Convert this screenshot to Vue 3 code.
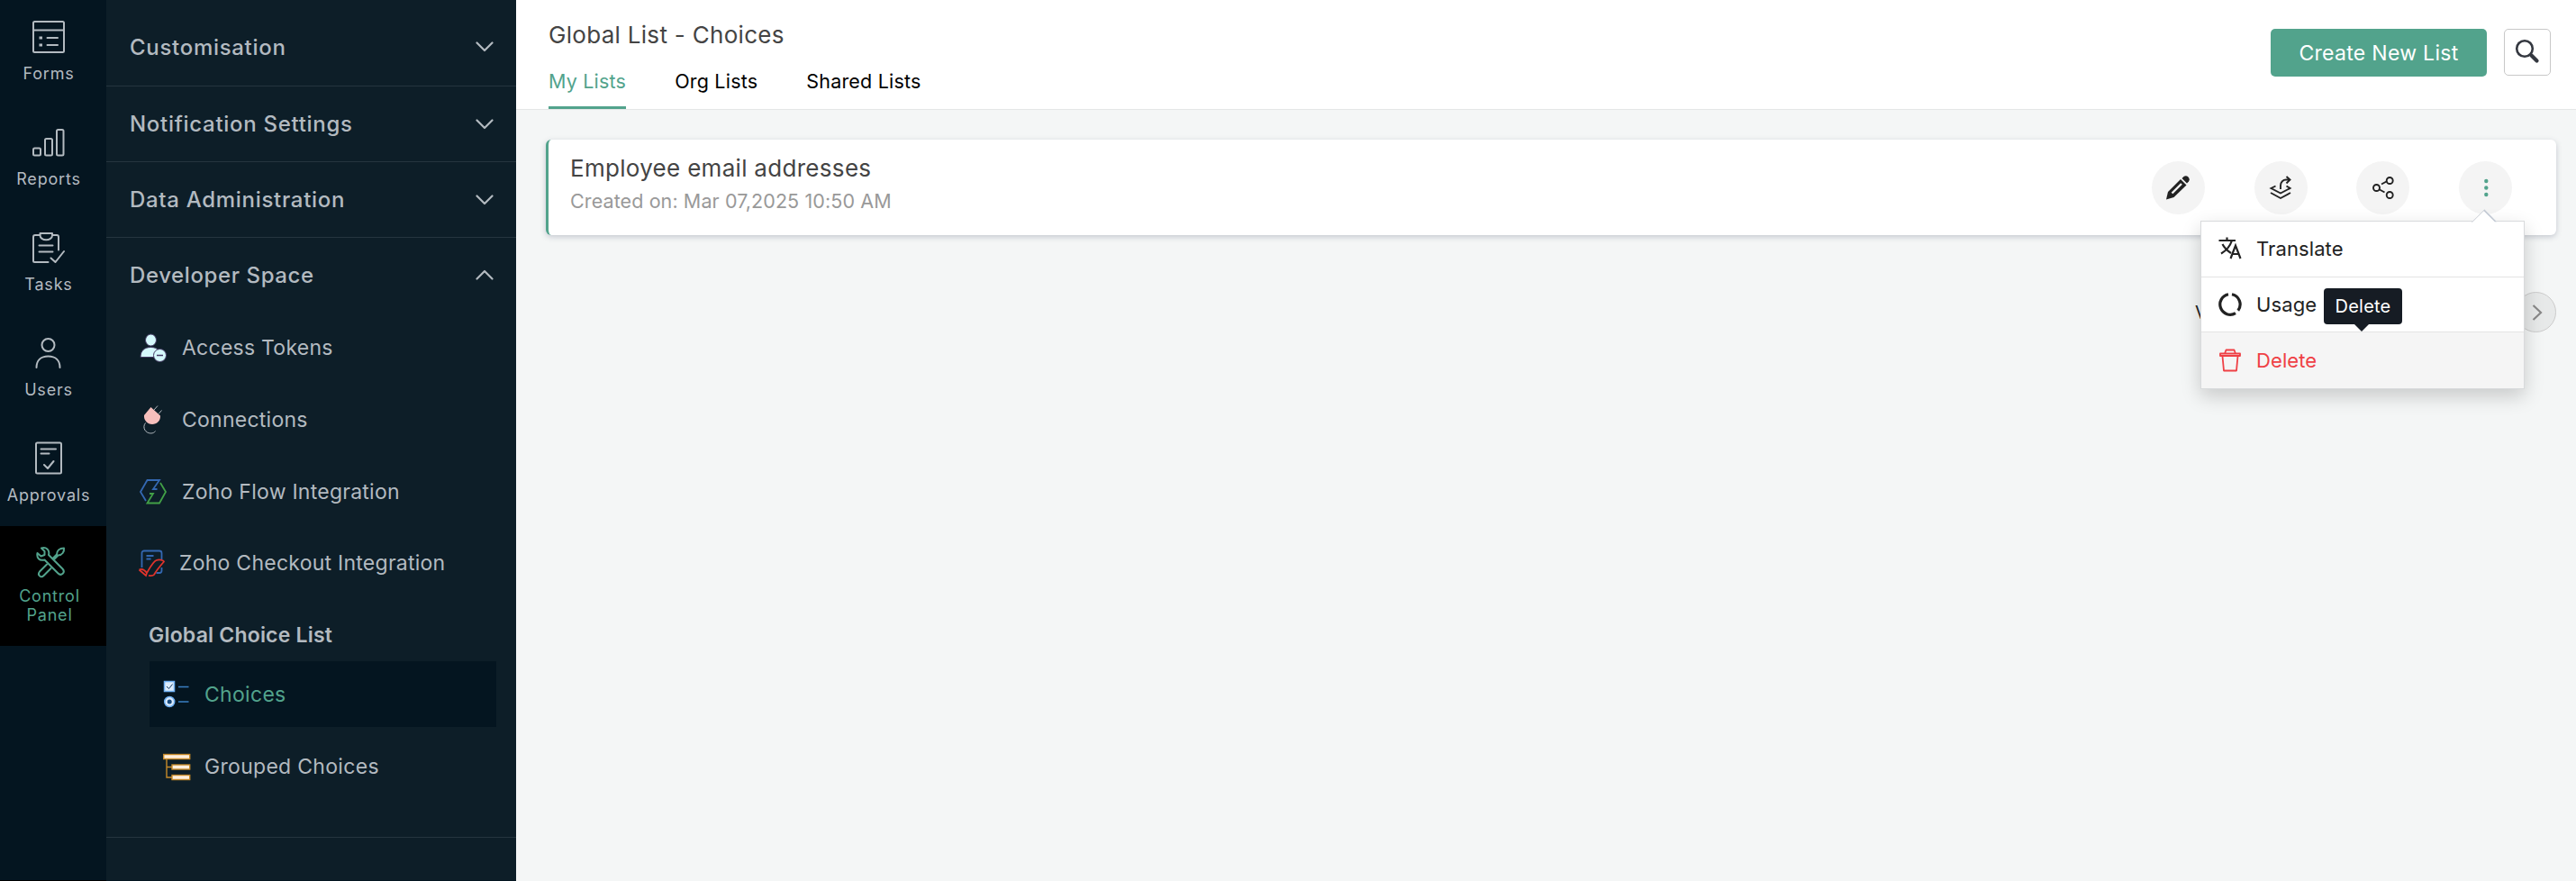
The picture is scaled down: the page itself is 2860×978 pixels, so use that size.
<template>
  <div class="app">
    <nav class="rail">
      <a v-for="item in railItems" :key="item.name" class="rail-item" :class="{ active: item.name === activeRail }" @click="activeRail = item.name">
        <svg v-if="item.icon === 'forms'" class="rail-icon" viewBox="0 0 36 40">
          <rect x="1" y="3" width="34" height="34" rx="1.5" />
          <path d="M1 12.5h34M16.5 21h11.5M16.5 29h11.5" />
          <path class="dots" d="M7.5 21h3.5M7.5 29h3.5" />
        </svg>
        <svg v-else-if="item.icon === 'reports'" class="rail-icon" viewBox="0 0 36 40">
          <rect x="1" y="26.5" width="8" height="8" rx="1.5" />
          <rect x="14" y="16" width="8" height="18.5" rx="1.5" />
          <rect x="27" y="6" width="7.5" height="28.5" rx="1.5" />
        </svg>
        <svg v-else-if="item.icon === 'tasks'" class="rail-icon" viewBox="0 0 36 40">
          <path d="M17.5 36H2.5a1.5 1.5 0 0 1-1.5-1.5V8a2 2 0 0 1 2-2h5.5M22 6h5a2 2 0 0 1 2 2v14.5" />
          <path d="M8.5 4h13.5v2.5a6.5 4.5 0 0 1-13.5 0zM7.5 17.5h15M7.5 24.5h15M20.5 31.5l5 4.5 9.5-12" />
        </svg>
        <svg v-else-if="item.icon === 'users'" class="rail-icon" viewBox="0 0 36 40">
          <circle cx="17.5" cy="11" r="7" />
          <path d="M4.5 36c0-8 5-12.5 13-12.5s13 4.5 13 12.5" />
        </svg>
        <svg v-else-if="item.icon === 'approvals'" class="rail-icon" viewBox="0 0 36 40">
          <rect x="4" y="2.5" width="28" height="34" rx="1.5" />
          <path d="M9.5 9.5h16.5M9.5 14.5h9M13 27l4 4 6.5-8" />
        </svg>
        <svg v-else class="rail-icon tools" viewBox="0 0 36 40">
          <path d="M9 4.500c5-2 9.500 2 8 7.500l15.500 15.500c3.500 4-1.500 8.500-5 5L12.500 17.500c-6 1.500-9-2.500-8-7.500l4 3.500 4-1.500v-4z" />
          <path d="M15 22.500l-8 8c-3 4 1.500 7.500 4.500 4.500l8-8M22 15.500l4-4c0-4 3-7 8-7 .5 4-2 8-6.500 8l-4 4" />
        </svg>
        <span class="rail-label">{{ item.name }}</span>
      </a>
    </nav>

    <aside class="sidebar">
      <div v-for="section in sections" :key="section" class="section-head">
        <span>{{ section }}</span>
        <svg class="chevron" :class="{ up: section === 'Developer Space' }" viewBox="0 0 20 12"><path d="M1.5 1.5L10 10l8.5-8.5" /></svg>
      </div>

      <div class="sub-list">
        <a class="sub-item">
          <svg class="sub-icon" viewBox="0 0 32 36">
            <g fill="#d5f9fc" stroke="#443a63" stroke-width="1">
              <ellipse cx="13.5" cy="9.5" rx="6" ry="6.5" />
              <path d="M2 28.5c0-7 4-11 11.500-11S24 21.500 24 28.500z" />
              <circle cx="23.5" cy="26.5" r="7" />
            </g>
            <path d="M20 26.500h7" stroke="#443a63" stroke-width="1.5" />
          </svg>
          <span>Access Tokens</span>
        </a>
        <a class="sub-item">
          <svg class="sub-icon" viewBox="0 0 32 36">
            <path d="M13.500 4l10.500 9.500c.5 5.500-4 9.500-9 9.500-5.500 0-9.500-4.500-9-10z" fill="#f7bfbc" />
            <path d="M17 7l4-4.500M22 11.500l3.500-4M7.500 21.500c-4 5 0 11.500 6 11.500 2.500 0 4-1 5-2.500" fill="none" stroke="#b3bac0" stroke-width="1" />
          </svg>
          <span>Connections</span>
        </a>
        <a class="sub-item">
          <svg class="sub-icon" viewBox="0 0 32 36" fill="none" stroke-width="1.8">
            <path d="M8 28L2 18l7.500-13H23l-7 10h4.500" stroke="#3468b2" />
            <path d="M24 8l6 10-7 12.500H9.500L16 20h-4" stroke="#42a047" />
          </svg>
          <span>Zoho Flow Integration</span>
        </a>
        <a class="sub-item checkout">
          <svg class="sub-icon" viewBox="0 0 32 36" fill="none" stroke-width="1.8">
            <path d="M4.500 23V7A2.500 2.500 0 0 1 7 4.500h17A2.500 2.500 0 0 1 26.500 7v7M26.500 23v3.500A2.500 2.500 0 0 1 24 29h-3.500M9.500 10h8M9.500 13.500h5" stroke="#3468b2" />
            <path d="M1.500 25.500c3-1.500 6 0 8.500 3.500C13.500 23 17 16.500 20.500 15c3-1.200 8-.5 8.500 1.500-3.500 4-8.500 10-11 14.500-1 1.200-4 1.200-6 .8M1.500 25.500L9 32l1-3" stroke="#e0342c" />
          </svg>
          <span>Zoho Checkout Integration</span>
        </a>
      </div>

      <div class="group">
        <div class="group-title">Global Choice List</div>
        <a class="group-item active">
          <svg class="group-icon" viewBox="0 0 32 36">
            <rect x="1.5" y="3.5" width="11" height="11" fill="#dcebfb" stroke="#6fb0f2" stroke-width="1.5" />
            <path d="M4 9l2.500 2.500 4-5" fill="none" stroke="#16395f" stroke-width="1" />
            <circle cx="7.2" cy="26" r="5.5" fill="#dcebfb" stroke="#6fb0f2" stroke-width="1.5" />
            <circle cx="7.2" cy="26" r="2.5" fill="#174a7d" />
            <path d="M17 9.500h11.500M17 26h11.500" stroke="#3a7fc2" stroke-width="1.5" />
          </svg>
          <span>Choices</span>
        </a>
        <a class="group-item">
          <svg class="group-icon" viewBox="0 0 32 36" stroke="#c68a2a" stroke-width="1.4" fill="#ffeedb">
            <path d="M4 8v22h6M4 18.500h6" fill="none" />
            <rect x="0.7" y="4.5" width="29" height="5" />
            <rect x="10" y="16" width="19.7" height="5" />
            <rect x="10" y="27.5" width="19.7" height="5" />
          </svg>
          <span>Grouped Choices</span>
        </a>
      </div>
    </aside>

    <main class="main">
      <header class="header">
        <div class="header-left">
          <h1>Global List - Choices</h1>
          <div class="tabs">
            <a v-for="tab in tabs" :key="tab" class="tab" :class="{ active: tab === activeTab }" @click="activeTab = tab">{{ tab }}</a>
          </div>
        </div>
        <button class="create-button">Create New List</button>
        <button class="search-button">
          <svg viewBox="0 0 28 28"><circle cx="11" cy="11" r="8.8" /><path class="handle" d="M18.5 18.5L24.5 24.5" /></svg>
        </button>
      </header>

      <section class="content">
        <article class="card">
          <div class="card-text">
            <div class="card-title">Employee email addresses</div>
            <div class="card-date">Created on: Mar 07,2025 10:50 AM</div>
          </div>
          <div class="actions">
            <button class="action">
              <svg viewBox="0 0 30 30">
                <path d="M2 27.500l2-8.500L18 5l6.500 6.500-14 13.500z" fill="#222" />
                <path d="M19.500 4l2-2c3.500-2.500 8 2 5.500 5.500l-2 2z" fill="#222" />
                <path d="M8.500 20.500L19 10" stroke="#f4f4f4" stroke-width="2.4" />
              </svg>
            </button>
            <button class="action">
              <svg viewBox="0 0 30 30" class="line">
                <path d="M9.500 12.500L4.500 15l10.500 5.500L25.500 15l-4-2.500M4 20l11 6 11-6M15 16V12c0-4 3-6.500 6-6.500h4M21.500 2L25.500 5.500l-4 4" />
              </svg>
            </button>
            <button class="action">
              <svg viewBox="0 0 30 30" class="line">
                <circle cx="7.5" cy="14.5" r="3.5" /><circle cx="22.2" cy="6.5" r="3.5" /><circle cx="22.2" cy="22.5" r="3.5" />
                <path d="M13 10.500l5.500-3M11 16.500l5.500 3" />
              </svg>
            </button>
            <div class="menu-anchor">
              <button class="action" @click="menuOpen = !menuOpen">
                <svg viewBox="0 0 30 30" fill="#52a38c"><circle cx="15.3" cy="7" r="2.2" /><circle cx="15.3" cy="14.5" r="2.2" /><circle cx="15.3" cy="22" r="2.2" /></svg>
              </button>
              <div v-if="menuOpen" class="menu">
                <a class="menu-item">
                  <svg viewBox="0 0 28 28" class="line">
                    <path d="M1.500 5h18.500M10.500 1.500V5M16 5c-2 6-6 11-12 14.500M5.500 9c2 4 5 7 9.500 10M14.500 25l5.500-14.500L25.500 25M16.500 20h7" />
                  </svg>
                  <span>Translate</span>
                </a>
                <a class="menu-item">
                  <svg viewBox="0 0 28 28"><path class="ring" d="M12 2.700A11.400 11.400 0 1 0 20 23.700M16 2.700a11.400 11.400 0 0 1 6.800 18" /></svg>
                  <span>Usage</span>
                </a>
                <a class="menu-item danger">
                  <svg viewBox="0 0 28 28">
                    <path d="M3 6.500h22v2.500H3zM8 6.500l1.500-4h9l1.500 4M5.500 9.500l1.500 16h14l1.500-16" />
                  </svg>
                  <span>Delete</span>
                </a>
                <div class="tooltip">Delete</div>
              </div>
            </div>
          </div>
        </article>

        <div class="pager">
          <span>View</span>
          <button class="next"><svg viewBox="0 0 12 20"><path d="M1.5 2L10 10l-8.5 8" /></svg></button>
        </div>
      </section>
    </main>
  </div>
</template>

<script setup>
import { ref } from 'vue'

const railItems = [
  { name: 'Forms', icon: 'forms' },
  { name: 'Reports', icon: 'reports' },
  { name: 'Tasks', icon: 'tasks' },
  { name: 'Users', icon: 'users' },
  { name: 'Approvals', icon: 'approvals' },
  { name: 'Control Panel', icon: 'tools' }
]
const sections = ['Customisation', 'Notification Settings', 'Data Administration', 'Developer Space']
const tabs = ['My Lists', 'Org Lists', 'Shared Lists']

const activeRail = ref('Control Panel')
const activeTab = ref('My Lists')
const menuOpen = ref(true)
</script>

<style>
body {
  background: #f4f6f6;
}
</style>

<style scoped>
.app {
  display: flex;
  width: 2860px;
  height: 978px;
  overflow: hidden;
  font-family: Inter, "Liberation Sans", sans-serif;
  letter-spacing: 0.3px;
}

.app *,
.app {
  box-sizing: border-box;
}

button {
  padding: 0;
  border: 0;
  font: inherit;
  letter-spacing: inherit;
  cursor: pointer;
}

/* Left rail */
.rail {
  width: 118px;
  flex: none;
  background: #041520;
  color: #b3bac0;
  border-bottom: 1px solid #000;
}

.rail-item {
  display: flex;
  flex-direction: column;
  align-items: center;
  height: 117px;
  padding: 21px 10px 0 0;
}

.rail-icon {
  width: 36px;
  height: 40px;
  fill: none;
  stroke: currentColor;
  stroke-width: 2;
  stroke-linecap: round;
  stroke-linejoin: round;
}

.rail-icon .dots {
  stroke-width: 3;
  stroke-linecap: butt;
}

.rail-label {
  margin-top: 10px;
  font-size: 18px;
  line-height: 21px;
  letter-spacing: 0.8px;
  text-align: center;
}

.rail-item.active {
  height: 133px;
  margin-top: -1px;
  background: #000;
  color: #52a38c;
  padding: 20px 8px 0 0;
}

.rail-item.active .rail-label {
  width: 90px;
  margin-top: 7px;
}

/* Section list */
.sidebar {
  width: 455px;
  flex: none;
  background: #0d1e28;
  color: #b3bac0;
  font-size: 23px;
  border-bottom: 1px solid #041520;
}

.section-head {
  display: flex;
  align-items: center;
  justify-content: space-between;
  height: 84px;
  padding: 0 25px 0 26px;
  font-size: 24px;
  font-weight: 500;
  letter-spacing: 0.7px;
  border-bottom: 1px solid #25353f;
}

.section-head:first-child {
  height: 96px;
  padding-top: 9px;
}

.section-head:nth-child(4) {
  height: 82px;
  border-bottom: 0;
  letter-spacing: 0.6px;
}

.chevron {
  width: 20px;
  height: 12px;
  fill: none;
  stroke: currentColor;
  stroke-width: 2.2;
  stroke-linecap: round;
  stroke-linejoin: round;
}

.chevron.up {
  transform: rotate(180deg);
}

.sub-item {
  display: flex;
  align-items: center;
  height: 80px;
  padding-left: 36px;
  letter-spacing: 0.25px;
}

.sub-icon {
  width: 32px;
  height: 36px;
  margin-right: 16px;
}

.sub-item.checkout {
  padding-left: 35px;
  height: 78px;
}

.sub-item.checkout .sub-icon {
  margin-right: 14px;
}

.group {
  height: 266px;
  padding: 24px 22px 0 48px;
  border-bottom: 1px solid #25353f;
}

.group-title {
  height: 46px;
  margin-left: -1px;
  line-height: 34px;
  font-weight: 600;
  letter-spacing: 0.2px;
}

.group-item {
  display: flex;
  align-items: center;
  height: 73px;
  padding-left: 15px;
}

.group-item + .group-item {
  margin-top: 7px;
}

.group-item.active {
  background: #041520;
  color: #52a38c;
}

.group-icon {
  width: 32px;
  height: 36px;
  margin-right: 14px;
}

/* Page */
.main {
  flex: 1;
  background: #f4f6f6;
}

.header {
  display: flex;
  align-items: flex-start;
  height: 122px;
  padding: 0 28px 0 36px;
  background: #fff;
  border-bottom: 1px solid #e4e6e6;
}

.header-left {
  flex: 1;
}

h1 {
  margin: 22px 0 0;
  color: #444;
  font-size: 26px;
  font-weight: 400;
  line-height: 34px;
}

.tabs {
  display: flex;
  gap: 54px;
  margin-top: 17px;
}

.tab {
  height: 48px;
  line-height: 34px;
  font-size: 21.5px;
  letter-spacing: 0.2px;
  color: #000;
}

.tab.active {
  color: #52a38c;
  border-bottom: 3px solid #52a38c;
}

.create-button {
  width: 240px;
  height: 53px;
  margin: 32px 19px 0 0;
  background: #52a38c;
  border-radius: 5px;
  color: #fff;
  font-size: 23px;
}

.search-button {
  width: 52px;
  height: 52px;
  margin-top: 32px;
  background: #fff;
  border: 1px solid #c8c8c8;
  border-radius: 5px;
}

.search-button svg {
  display: block;
  width: 28px;
  height: 28px;
  margin: -2px 0 0 11px;
  fill: none;
  stroke: #343840;
  stroke-width: 2.6;
}

.search-button .handle {
  stroke-width: 4.2;
  stroke-linecap: round;
}

.content {
  padding: 33px 22px 0 33px;
}

.card {
  display: flex;
  justify-content: space-between;
  height: 106px;
  padding: 0 49px 0 24px;
  background: #fff;
  border-left: 3px solid #52a38c;
  border-radius: 6px;
  box-shadow: 0 2px 6px rgba(50, 60, 90, 0.25);
}

.card-title {
  margin-top: 15px;
  color: #444;
  font-size: 26px;
  line-height: 34px;
}

.card-date {
  margin-top: 4px;
  color: #999;
  font-size: 21.5px;
  line-height: 30px;
  letter-spacing: 0.1px;
}

.actions {
  display: flex;
  gap: 54.7px;
  padding-top: 24px;
}

.action {
  display: flex;
  align-items: center;
  justify-content: center;
  width: 59px;
  height: 59px;
  border-radius: 50%;
  background: #f4f4f4;
}

.action svg {
  width: 30px;
  height: 30px;
}

.line {
  fill: none;
  stroke: #222;
  stroke-width: 1.9;
}

.menu-anchor {
  position: relative;
}

.menu {
  position: absolute;
  top: 66px;
  right: -14px;
  width: 360px;
  background: #fff;
  border: 1px solid #d8dadc;
  box-shadow: 0 8px 20px rgba(0, 0, 0, 0.18);
  z-index: 2;
}

.menu::before {
  content: "";
  position: absolute;
  top: -10px;
  right: 34px;
  width: 19px;
  height: 19px;
  background: #fff;
  border-top: 2px solid #c3cad4;
  border-left: 1px solid #d0d4da;
  transform: rotate(45deg);
  clip-path: polygon(0 0, 100% 0, 0 100%);
}

.menu-item {
  display: flex;
  align-items: center;
  height: 62px;
  padding: 0 0 2px 18px;
  color: #222;
  font-size: 22px;
  letter-spacing: 0.1px;
  border-bottom: 1px solid #e4e4e4;
}

.menu-item:nth-child(2) {
  height: 61px;
  padding-bottom: 1px;
}

.menu-item svg {
  width: 28px;
  height: 28px;
  margin-right: 15px;
}

.menu-item .line {
  stroke-width: 2.2;
}

.ring {
  fill: none;
  stroke: #222;
  stroke-width: 3.2;
}

.menu-item.danger {
  padding-bottom: 1px;
  background: #f5f5f5;
  color: #ef4045;
  border-bottom: 0;
}

.danger svg {
  fill: none;
  stroke: #ef4045;
  stroke-width: 1.8;
  stroke-linejoin: round;
}

.tooltip {
  position: absolute;
  left: 136px;
  top: 74px;
  width: 87px;
  height: 40px;
  background: #161c24;
  border-radius: 4px;
  color: #fff;
  font-size: 20px;
  line-height: 41px;
  letter-spacing: 0.2px;
  text-align: center;
}

.tooltip::after {
  content: "";
  position: absolute;
  left: 34px;
  top: 40px;
  border: 8px solid transparent;
  border-top-color: #161c24;
  border-bottom: 0;
}

.pager {
  display: flex;
  align-items: center;
  justify-content: space-between;
  width: 401px;
  margin: 63px 0 0 auto;
  color: #222;
  font-size: 20px;
}

.next {
  width: 45px;
  height: 45px;
  border: 1px solid #ccc;
  border-radius: 50%;
  background: #e7e9e9;
}

.next svg {
  display: block;
  width: 12px;
  height: 20px;
  margin-left: 17px;
  fill: none;
  stroke: #888;
  stroke-width: 2.2;
}
</style>
